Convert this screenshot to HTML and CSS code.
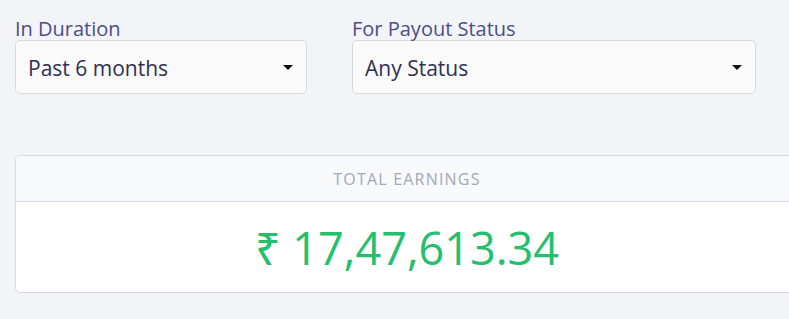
FILE: index.html
```html
<!DOCTYPE html>
<html lang="en">
<head>
  <meta charset="UTF-8" />
  <title>Earnings</title>
  <link rel="stylesheet" href="styles.css">
</head>
<body>

  <div class="filters">
    <div class="field field-duration">
      <label for="duration">In Duration</label>
      <div class="select">
        <span>Past 6 months</span>
        <span class="caret"></span>
      </div>
    </div>

    <div class="field field-status">
      <label for="status">For Payout Status</label>
      <div class="select">
        <span>Any Status</span>
        <span class="caret"></span>
      </div>
    </div>
  </div>

  <div class="card">
    <div class="card-header">TOTAL EARNINGS</div>
    <div class="card-body">
      <span class="amount">₹ 17,47,613.34</span>
    </div>
  </div>

</body>
</html>
```

FILE: styles.css
```css
* {
  box-sizing: border-box;
}

body {
  font-family: 'Open Sans', 'Noto Sans', sans-serif;
  background: #f3f4f8;
  margin: 0;
  padding: 17px 15px;
  width: 814px;
  overflow: hidden;
  color: #2f2f4f;
}

.filters {
  display: flex;
  gap: 45px;
}

.field label {
  display: block;
  font-size: 20px;
  line-height: 23px;
  color: #4b4d8a;
}

.field-duration {
  width: 292px;
}

.field-status {
  width: 404px;
}

.select {
  display: flex;
  align-items: center;
  justify-content: space-between;
  height: 54px;
  padding: 1px 13px 0 12px;
  background: #fafafb;
  border: 1px solid #d8d9df;
  border-radius: 5px;
  font-size: 21px;
  color: #2f2f52;
}

.caret {
  width: 0;
  height: 0;
  border-left: 5px solid transparent;
  border-right: 5px solid transparent;
  border-top: 5px solid #111;
}

.card {
  margin-top: 61px;
  width: 784px;
  background: #fff;
  border: 1px solid #d4dce8;
  border-radius: 5px;
  overflow: hidden;
}

.card-header {
  height: 46px;
  display: flex;
  align-items: center;
  justify-content: center;
  background: #f8f9fb;
  border-bottom: 1px solid #d4dce8;
  font-size: 16px;
  letter-spacing: 1.2px;
  color: #a3a8b8;
}

.card-body {
  height: 90px;
  display: flex;
  align-items: center;
  justify-content: center;
}

.amount {
  font-size: 45px;
  color: #22c06c;
}
```
